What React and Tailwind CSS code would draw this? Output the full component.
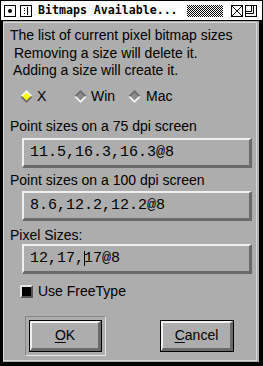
import React from 'react';

const GRAY = 'bg-[#adadad]';

function Diamond({ selected }) {
  // radio button drawn as a bevelled diamond
  return (
    <svg width="13" height="13" viewBox="0 0 13 13" className="shrink-0">
      <polygon points="0,6.5 6.5,0 13,6.5" fill={selected ? '#f4f4f4' : '#6a6a6a'} />
      <polygon points="0,6.5 6.5,13 13,6.5" fill={selected ? '#6a6a6a' : '#f4f4f4'} />
      <polygon points="2.5,6.5 6.5,2.5 10.5,6.5 6.5,10.5" fill={selected ? '#ffff00' : '#8c8c8c'} />
    </svg>
  );
}

function Field({ children }) {
  return (
    <div className="ml-[18px] w-[230px] h-[30px] flex items-center pl-[6px] border-t-2 border-l-2 border-r-[3px] border-b-[3px] border-t-[#f0f0f0] border-l-[#f0f0f0] border-r-[#6a6a6a] border-b-[#6a6a6a] font-['Liberation_Mono',monospace] text-[15px] leading-none text-black whitespace-pre">
      {children}
    </div>
  );
}

function Button({ children, className = '' }) {
  return (
    <div className={`h-[32px] border border-black ${className}`}>
      <div className="h-full flex items-center justify-center border-t-2 border-l-2 border-r-[3px] border-b-[3px] border-t-[#f0f0f0] border-l-[#f0f0f0] border-r-[#6a6a6a] border-b-[#6a6a6a] text-[14px]">
        {children}
      </div>
    </div>
  );
}

export default function App() {
  return (
    <div className="w-[263px] h-[366px] bg-black flex flex-col overflow-hidden font-['Liberation_Sans',Arial,sans-serif] text-black">
      {/* title bar */}
      <div className="mx-px mt-px h-[19px] bg-white flex items-center pl-[3px]">
        <div className="w-[12px] h-[12px] border border-black flex items-center justify-center">
          <div className="w-[4px] h-[4px] rounded-full bg-black" />
        </div>
        <svg width="12" height="12" viewBox="0 0 12 12" className="ml-[4px]">
          <rect x="0.5" y="0.5" width="11" height="11" fill="white" stroke="black" />
          <line x1="7.5" y1="2" x2="7.5" y2="10" stroke="black" />
          <rect x="4" y="3" width="1" height="1" fill="black" />
          <rect x="4" y="5" width="1" height="1" fill="black" />
          <rect x="4" y="8" width="1" height="1" fill="black" />
        </svg>
        <span className="ml-[6px] w-[143px] font-['DejaVu_Sans_Mono',monospace] font-bold text-[11.6px] leading-none whitespace-pre">
          Bitmaps Available...
        </span>
        <svg width="36" height="12" className="ml-[6px]">
          <defs>
            <pattern id="stip" width="2" height="2" patternUnits="userSpaceOnUse">
              <rect width="2" height="2" fill="white" />
              <rect width="1" height="1" fill="black" />
              <rect x="1" y="1" width="1" height="1" fill="black" />
            </pattern>
          </defs>
          <rect width="36" height="12" fill="url(#stip)" />
        </svg>
        <svg width="12" height="12" viewBox="0 0 12 12" className="ml-[8px]">
          <rect x="0.5" y="0.5" width="11" height="11" fill="white" stroke="black" />
          <line x1="1" y1="1" x2="11" y2="11" stroke="black" />
          <line x1="11" y1="1" x2="1" y2="11" stroke="black" />
        </svg>
        <svg width="12" height="12" viewBox="0 0 12 12" className="ml-[2px]">
          <rect x="0.5" y="0.5" width="11" height="11" fill="white" stroke="black" />
          <polyline points="6.5,1 6.5,6.5 1,6.5" fill="none" stroke="black" />
          <polyline points="8.5,1 8.5,8.5 1,8.5" fill="none" stroke="black" />
        </svg>
      </div>

      {/* body */}
      <div className={`mt-px ml-[3px] mr-[4px] mb-[4px] flex-1 ${GRAY} pt-px pr-[2px] pb-px`}>
        <div className="h-full border border-[#d8d8d8] flex flex-col text-[14px]">
          <div className="mt-[4px] pl-[6px] leading-[17.5px] whitespace-pre">
            <div>The list of current pixel bitmap sizes</div>
            <div> Removing a size will delete it.</div>
            <div> Adding a size will create it.</div>
          </div>

          <div className="mt-[10.5px] h-[13px] pl-[16px] flex items-center">
            <div className="w-[54px] flex items-center gap-[4px]">
              <Diamond selected />
              <span>X</span>
            </div>
            <div className="w-[54px] flex items-center gap-[4px]">
              <Diamond />
              <span>Win</span>
            </div>
            <div className="flex items-center gap-[5px]">
              <Diamond />
              <span>Mac</span>
            </div>
          </div>

          <div className="mt-[15px] pl-[6px] leading-[17px]">Point sizes on a 75 dpi screen</div>
          <div className="mt-[3px]">
            <Field>11.5,16.3,16.3@8</Field>
          </div>

          <div className="mt-[4px] pl-[6px] leading-[17px]">Point sizes on a 100 dpi screen</div>
          <div className="mt-[2px]">
            <Field>8.6,12.2,12.2@8</Field>
          </div>

          <div className="mt-[6px] pl-[6px] leading-[17px]">Pixel Sizes:</div>
          <div>
            <Field>
              12,17,<span className="inline-block w-px h-[15px] bg-black -mr-px align-middle" />17@8
            </Field>
          </div>

          <div className="mt-[9px] h-[17px] pl-[16px] flex items-center gap-[5px]">
            <div className="w-[13px] h-[13px] border-2 border-t-[#e4e4e4] border-l-[#e4e4e4] border-r-[#555555] border-b-[#555555] bg-black" />
            <span>Use FreeType</span>
          </div>

          <div className="mt-[16px] flex items-start">
            <div className="ml-[21px] w-[81px] h-[40px] border border-t-[#888888] border-l-[#888888] border-r-[#e4e4e4] border-b-[#e4e4e4] p-[3px]">
              <Button>
                <span><span className="underline underline-offset-2">O</span>K</span>
              </Button>
            </div>
            <Button className="ml-[54px] w-[74px] mt-[4px]">
              <span><span className="underline underline-offset-2">C</span>ancel</span>
            </Button>
          </div>
        </div>
      </div>
    </div>
  );
}
